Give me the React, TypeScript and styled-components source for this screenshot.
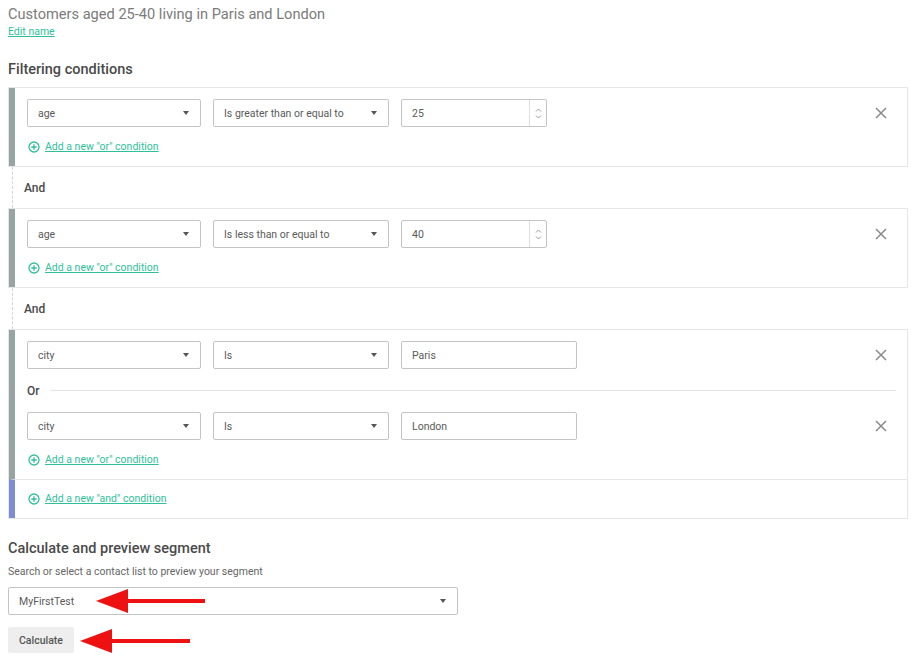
import React from 'react';
import styled, { createGlobalStyle } from 'styled-components';

const GlobalStyle = createGlobalStyle`
  body {
    margin: 0;
    background: #ffffff;
    font-family: Roboto, "Liberation Sans", Arial, sans-serif;
  }
`;

const Page = styled.div`
  padding: 4px 9px 0 8px;
  width: 917px;
  box-sizing: border-box;
`;

const Title = styled.div`
  font-size: 14.6px;
  line-height: 20px;
  color: #7b7b7b;
`;

const EditLink = styled.a`
  display: block;
  margin-top: 1px;
  font-size: 10.5px;
  line-height: 14px;
  color: #2fbf9b;
  text-decoration: underline;
`;

const SectionTitle = styled.h2<{ $top: number }>`
  margin: ${(p) => p.$top}px 0 0;
  font-size: 14.5px;
  line-height: 20px;
  font-weight: 500;
  color: #4a4a4a;
`;

const Group = styled.div<{ $top?: number }>`
  margin-top: ${(p) => p.$top ?? 0}px;
  border: 1px solid #e6e6e6;
  background: #fff;
`;

const Segment = styled.div<{ $accent: string; $divided?: boolean }>`
  border-left: 6px solid ${(p) => p.$accent};
  border-top: ${(p) => (p.$divided ? '1px solid #e6e6e6' : 'none')};
  padding: 11px 11px 12px 12px;
  display: flex;
  flex-direction: column;
`;

const Row = styled.div`
  display: flex;
  align-items: center;
  gap: 12px;
  height: 28px;
`;

const Field = styled.div<{ $width: number }>`
  width: ${(p) => p.$width}px;
  height: 28px;
  box-sizing: border-box;
  border: 1px solid #c4c4c4;
  border-radius: 2px;
  display: flex;
  align-items: center;
  padding-left: 10px;
  font-size: 10.5px;
  color: #5a5a5a;
  background: #fff;
`;

const FieldText = styled.span`
  flex: 1;
`;

const Caret = styled.span`
  width: 0;
  height: 0;
  margin-right: 11px;
  border-left: 3.5px solid transparent;
  border-right: 3.5px solid transparent;
  border-top: 4px solid #555;
`;

const Spinner = styled.div`
  width: 16px;
  height: 100%;
  border-left: 1px solid #dedede;
  display: flex;
  flex-direction: column;
  align-items: center;
  justify-content: center;
  gap: 3px;
`;

const RemoveButton = styled.button`
  margin-left: auto;
  margin-right: 8px;
  border: none;
  background: none;
  padding: 0;
  width: 14px;
  height: 14px;
  display: flex;
  align-items: center;
  justify-content: center;
  cursor: pointer;
`;

const AddLink = styled.a<{ $top: number }>`
  margin-top: ${(p) => p.$top}px;
  margin-left: 1px;
  display: flex;
  align-items: center;
  gap: 5px;
  font-size: 10.5px;
  line-height: 14px;
  color: #2fbf9b;
  text-decoration: underline;
  cursor: pointer;
`;

const OrDivider = styled.div`
  display: flex;
  align-items: center;
  gap: 10px;
  height: 43px;
  font-size: 12px;
  font-weight: 500;
  color: #4a4a4a;
  &::after {
    content: '';
    flex: 1;
    height: 1px;
    background: #e3e3e3;
  }
`;

const AndConnector = styled.div`
  height: 41px;
  display: flex;
  align-items: center;
  padding-left: 11px;
  font-size: 12px;
  font-weight: 500;
  color: #4a4a4a;
  border-left: 1px dashed #d4d4d4;
  margin-left: 4px;
`;

const Hint = styled.div`
  margin-top: 6px;
  font-size: 10.5px;
  line-height: 14px;
  color: #666;
`;

const PreviewRow = styled.div`
  position: relative;
  margin-top: 8px;
  width: 450px;
`;

const Button = styled.button`
  margin-top: 12px;
  height: 26px;
  width: 66px;
  border: none;
  border-radius: 2px;
  background: #eeeeee;
  font-family: inherit;
  font-size: 10.5px;
  font-weight: 500;
  color: #555;
  cursor: pointer;
`;

const ButtonRow = styled.div`
  position: relative;
  width: 200px;
`;

const Arrow = styled.svg<{ $left: number; $top: number }>`
  position: absolute;
  left: ${(p) => p.$left}px;
  top: ${(p) => p.$top}px;
  pointer-events: none;
`;

const teal = '#2fbf9b';

const PlusCircle = () => (
  <svg width="12" height="12" viewBox="0 0 12 12">
    <circle cx="6" cy="6" r="5" fill="none" stroke={teal} strokeWidth="1.3" />
    <path d="M6 3.3v5.4M3.3 6h5.4" stroke={teal} strokeWidth="1.3" />
  </svg>
);

const CloseIcon = () => (
  <svg width="12" height="12" viewBox="0 0 12 12">
    <path d="M1 1l10 10M11 1L1 11" stroke="#8a8a8a" strokeWidth="1.5" />
  </svg>
);

const RedArrow = ({ left, top, length }: { left: number; top: number; length: number }) => (
  <Arrow $left={left} $top={top} width={length} height="26" viewBox={`0 0 ${length} 26`}>
    <polygon points="0,13 32,1 32,25" fill="#ee1111" />
    <rect x="30" y="11" width={length - 30} height="4" fill="#ee1111" />
  </Arrow>
);

type Cond = { field: string; op: string; value: string; numeric?: boolean };

const Select = ({ width, text }: { width: number; text: string }) => (
  <Field $width={width}>
    <FieldText>{text}</FieldText>
    <Caret />
  </Field>
);

const Condition = ({ c }: { c: Cond }) => (
  <Row>
    <Select width={174} text={c.field} />
    <Select width={176} text={c.op} />
    {c.numeric ? (
      <Field $width={146} style={{ paddingRight: 0 }}>
        <FieldText>{c.value}</FieldText>
        <Spinner>
          <svg width="7" height="4" viewBox="0 0 7 4">
            <path d="M1 3.5L3.5 1 6 3.5" fill="none" stroke="#999" />
          </svg>
          <svg width="7" height="4" viewBox="0 0 7 4">
            <path d="M1 0.5L3.5 3 6 0.5" fill="none" stroke="#999" />
          </svg>
        </Spinner>
      </Field>
    ) : (
      <Field $width={176}>
        <FieldText>{c.value}</FieldText>
      </Field>
    )}
    <RemoveButton aria-label="Remove">
      <CloseIcon />
    </RemoveButton>
  </Row>
);

const App: React.FC = () => {
  return (
    <Page>
      <GlobalStyle />
      <Title>Customers aged 25-40 living in Paris and London</Title>
      <EditLink>Edit name</EditLink>

      <SectionTitle $top={21}>Filtering conditions</SectionTitle>

      <Group $top={7}>
        <Segment $accent="#96a5a2">
          <Condition c={{ field: 'age', op: 'Is greater than or equal to', value: '25', numeric: true }} />
          <AddLink $top={13}>
            <PlusCircle />
            Add a new "or" condition
          </AddLink>
        </Segment>
      </Group>

      <AndConnector>And</AndConnector>

      <Group>
        <Segment $accent="#96a5a2">
          <Condition c={{ field: 'age', op: 'Is less than or equal to', value: '40', numeric: true }} />
          <AddLink $top={13}>
            <PlusCircle />
            Add a new "or" condition
          </AddLink>
        </Segment>
      </Group>

      <AndConnector>And</AndConnector>

      <Group>
        <Segment $accent="#96a5a2">
          <Condition c={{ field: 'city', op: 'Is', value: 'Paris' }} />
          <OrDivider>Or</OrDivider>
          <Condition c={{ field: 'city', op: 'Is', value: 'London' }} />
          <AddLink $top={13}>
            <PlusCircle />
            Add a new "or" condition
          </AddLink>
        </Segment>
        <Segment $accent="#7b8ed3" $divided>
          <AddLink $top={1}>
            <PlusCircle />
            Add a new "and" condition
          </AddLink>
        </Segment>
      </Group>

      <SectionTitle $top={20}>Calculate and preview segment</SectionTitle>
      <Hint>Search or select a contact list to preview your segment</Hint>

      <PreviewRow>
        <Select width={450} text="MyFirstTest" />
        <RedArrow left={88} top={1} length={109} />
      </PreviewRow>

      <ButtonRow>
        <Button>Calculate</Button>
        <RedArrow left={72} top={13} length={110} />
      </ButtonRow>
    </Page>
  );
};

export default App;
